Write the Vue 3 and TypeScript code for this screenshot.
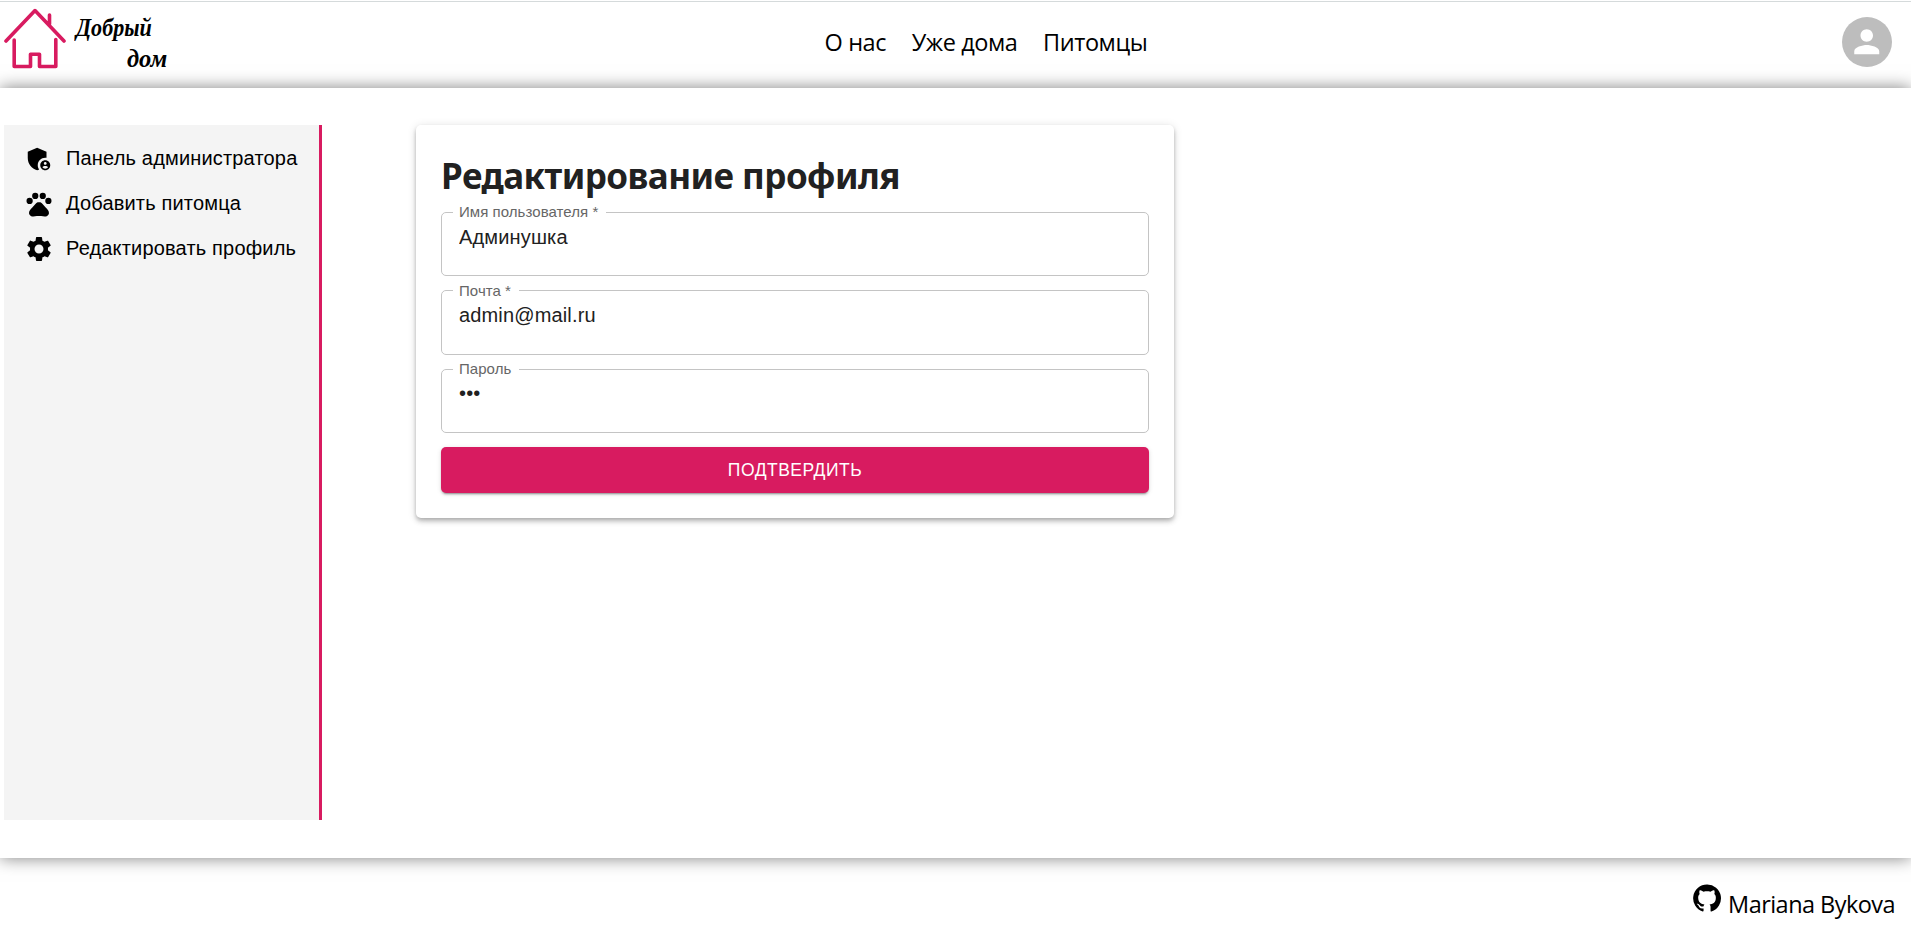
<script setup lang="ts">
import { ref } from 'vue'

interface Field {
  id: string
  label: string
  type: string
  value: string
}

const links = ['О нас', 'Уже дома', 'Питомцы']

const menu = [
  {
    text: 'Панель администратора',
    paths: [
      'M17 11c.34 0 .67.04 1 .09V6.27L10.5 3 3 6.27v4.91c0 4.54 3.2 8.79 7.5 9.82.55-.13 1.08-.32 1.6-.55-.69-.98-1.1-2.17-1.1-3.45 0-3.31 2.69-6 6-6z',
      'M17 13c-2.21 0-4 1.79-4 4s1.79 4 4 4 4-1.79 4-4-1.79-4-4-4zm0 1.38c.62 0 1.12.51 1.12 1.12s-.51 1.12-1.12 1.12-1.12-.51-1.12-1.12.5-1.12 1.12-1.12zm0 5.37c-.93 0-1.74-.46-2.24-1.17.05-.72 1.51-1.08 2.24-1.08s2.19.36 2.24 1.08c-.5.71-1.31 1.17-2.24 1.17z',
    ],
  },
  {
    text: 'Добавить питомца',
    paths: [
      'M2 9.5a2.5 2.5 0 1 0 5 0a2.5 2.5 0 1 0-5 0M6.5 5.5a2.5 2.5 0 1 0 5 0a2.5 2.5 0 1 0-5 0M12.5 5.5a2.5 2.5 0 1 0 5 0a2.5 2.5 0 1 0-5 0M17 9.5a2.5 2.5 0 1 0 5 0a2.5 2.5 0 1 0-5 0',
      'M17.34 14.86c-.87-1.02-1.6-1.89-2.48-2.91-.46-.54-1.05-1.08-1.75-1.32-.11-.04-.22-.07-.33-.09-.25-.04-.52-.04-.78-.04s-.53 0-.79.05c-.11.02-.22.05-.33.09-.7.24-1.28.78-1.75 1.32-.87 1.02-1.6 1.89-2.48 2.91-1.31 1.31-2.92 2.76-2.62 4.79.29 1.02 1.02 2.03 2.33 2.32.73.15 3.06-.44 5.54-.44h.18c2.48 0 4.81.58 5.54.44 1.31-.29 2.04-1.31 2.33-2.32.31-2.04-1.3-3.49-2.61-4.8z',
    ],
  },
  {
    text: 'Редактировать профиль',
    paths: [
      'M19.14 12.94c.04-.3.06-.61.06-.94 0-.32-.02-.64-.07-.94l2.03-1.58c.18-.14.23-.41.12-.61l-1.92-3.32c-.12-.22-.37-.29-.59-.22l-2.39.96c-.5-.38-1.03-.7-1.62-.94l-.36-2.54c-.04-.24-.24-.41-.48-.41h-3.84c-.24 0-.43.17-.47.41l-.36 2.54c-.59.24-1.13.57-1.62.94l-2.39-.96c-.22-.08-.47 0-.59.22L2.74 8.87c-.12.21-.08.47.12.61l2.03 1.58c-.05.3-.09.63-.09.94s.02.64.07.94l-2.03 1.58c-.18.14-.23.41-.12.61l1.92 3.32c.12.22.37.29.59.22l2.39-.96c.5.38 1.03.7 1.62.94l.36 2.54c.05.24.24.41.48.41h3.84c.24 0 .44-.17.47-.41l.36-2.54c.59-.24 1.13-.56 1.62-.94l2.39.96c.22.08.47 0 .59-.22l1.92-3.32c.12-.22.07-.47-.12-.61l-2.01-1.58zM12 15.6c-1.98 0-3.6-1.62-3.6-3.6s1.62-3.6 3.6-3.6 3.6 1.62 3.6 3.6-1.62 3.6-3.6 3.6z',
    ],
  },
]

const fields = ref<Field[]>([
  { id: 'name', label: 'Имя пользователя *', type: 'text', value: 'Админушка' },
  { id: 'mail', label: 'Почта *', type: 'text', value: 'admin@mail.ru' },
  { id: 'password', label: 'Пароль', type: 'password', value: '123' },
])
</script>

<template>
  <div class="page">
    <header class="header">
      <div class="brand">
        <svg class="house" viewBox="0 0 62 62" fill="none" stroke="#d81b60" stroke-width="3.6" stroke-linecap="round" stroke-linejoin="round">
          <path d="M2 33 31 2.600 60 33M45.500 16V7" />
          <path d="M10.200 32v26.500h16.300V46.200h9v12.300H51.800V31.500" />
        </svg>
        <div class="brand-name">
          <span class="word first">Добрый</span>
          <span class="word second">дом</span>
        </div>
      </div>
      <nav class="nav">
        <a v-for="link in links" :key="link">{{ link }}</a>
      </nav>
      <div class="avatar">
        <svg viewBox="0 0 24 24" fill="#fff">
          <path d="M12 12c2.210 0 4-1.790 4-4s-1.790-4-4-4-4 1.790-4 4 1.790 4 4 4zm0 2c-2.670 0-8 1.340-8 4v2h16v-2c0-2.660-5.330-4-8-4z" />
        </svg>
      </div>
    </header>

    <main class="main">
      <aside class="sidebar">
        <a v-for="item in menu" :key="item.text" class="menu-item">
          <svg viewBox="0 0 24 24"><path v-for="d in item.paths" :key="d" :d="d" /></svg>
          <span>{{ item.text }}</span>
        </a>
      </aside>
      <form class="card" @submit.prevent>
        <h1>Редактирование профиля</h1>
        <fieldset v-for="field in fields" :key="field.id" class="field">
          <legend><label :for="field.id">{{ field.label }}</label></legend>
          <input :id="field.id" v-model="field.value" :type="field.type" />
        </fieldset>
        <button type="submit">Подтвердить</button>
      </form>
    </main>

    <footer class="footer">
      <svg viewBox="0 0 24 24">
        <path d="M12 1.270a11 11 0 00-3.480 21.460c.55.09.73-.28.73-.55v-1.840c-3.030.64-3.670-1.460-3.670-1.460-.55-1.290-1.280-1.650-1.280-1.650-.92-.65.1-.65.1-.65 1.100 0 1.730 1.100 1.730 1.100.92 1.650 2.570 1.200 3.210.92a2 2 0 01.64-1.470c-2.470-.27-5.040-1.190-5.040-5.500 0-1.100.46-2.100 1.200-2.840a3.760 3.760 0 010-2.930s.91-.28 3.110 1.100c1.800-.49 3.700-.49 5.500 0 2.100-1.380 3.020-1.100 3.020-1.100a3.760 3.760 0 01.1 2.930c.83.74 1.200 1.740 1.200 2.940 0 4.210-2.570 5.130-5.040 5.400.45.37.82.92.82 2.020v3.030c0 .27.1.64.73.55A11 11 0 0012 1.270" />
      </svg>
      <a>Mariana Bykova</a>
    </footer>
  </div>
</template>

<style>
body {
  background: #fff;
  overflow: hidden;
}
</style>

<style scoped>
.page {
  height: 926px;
  box-sizing: border-box;
  display: flex;
  flex-direction: column;
  padding-top: 1px;
  overflow: hidden;
  color: #000;
  font-family: 'Open Sans', 'Noto Sans', sans-serif;
}

.header {
  height: 87px;
  flex: none;
  box-sizing: border-box;
  border-top: 1px solid #d5dadb;
  display: grid;
  grid-template-columns: 1fr auto 1fr;
  align-items: start;
}

.brand {
  display: flex;
  padding: 6px 0 0 4px;
}

.house {
  width: 62px;
  height: 62px;
}

.brand-name {
  display: flex;
  flex-direction: column;
  align-items: flex-start;
  width: 104px;
  padding: 4px 0 0 10px;
  font: italic bold 26px/31px 'Liberation Serif', serif;
}

.word {
  white-space: nowrap;
  transform-origin: left center;
}

.first {
  transform: scaleX(0.85);
}

.second {
  margin-left: 51px;
  transform: scaleX(0.94);
}

.nav {
  display: flex;
  gap: 25.5px;
  padding: 24px 0 0 61px;
  font-size: 23.5px;
  line-height: 33px;
  letter-spacing: -0.4px;
}

.avatar {
  justify-self: end;
  width: 50px;
  height: 50px;
  margin: 15px 19px 0 0;
  border-radius: 50%;
  background: #bdbdbd;
  display: flex;
  align-items: center;
  justify-content: center;
}

.avatar svg {
  width: 37.5px;
  height: 37.5px;
}

.main {
  height: 770px;
  flex: none;
  box-sizing: border-box;
  display: flex;
  align-items: flex-start;
  padding: 37px 0 38px 4px;
  box-shadow: 0 0 16px rgba(0, 0, 0, 0.5);
}

.sidebar {
  width: 318px;
  height: 695px;
  flex: none;
  box-sizing: border-box;
  padding: 11px 0 0 20px;
  border-right: 3px solid #d81b60;
  background: #f4f4f4;
  font: 20px/45px 'Liberation Sans', Arial, sans-serif;
  letter-spacing: 0.17px;
}

.menu-item {
  display: flex;
  align-items: center;
  gap: 12px;
  height: 45px;
  white-space: nowrap;
}

.menu-item svg {
  width: 30px;
  height: 30px;
}

.card {
  width: 758px;
  height: 393px;
  flex: none;
  box-sizing: border-box;
  margin-left: 94px;
  padding: 25px;
  border-radius: 5px;
  color: #212121;
  box-shadow: 0 2px 4px -1px rgba(0, 0, 0, 0.2), 0 4px 5px 0 rgba(0, 0, 0, 0.14), 0 1px 10px 0 rgba(0, 0, 0, 0.12);
}

h1 {
  height: 54px;
  margin: 0;
  font-family: 'Noto Sans', 'Open Sans', sans-serif;
  font-size: 35px;
  line-height: 51px;
  font-weight: 700;
  letter-spacing: -0.55px;
  white-space: nowrap;
}

.field {
  width: 708px;
  height: 72px;
  box-sizing: border-box;
  margin: 0 0 6.5px;
  padding: 0 17px;
  border: 1px solid #c4c4c4;
  border-radius: 5px;
  min-width: 0;
  font-family: 'Liberation Sans', Arial, sans-serif;
}

legend {
  height: 16px;
  margin-left: -6px;
  padding: 0 8px 0 6px;
  font-size: 15px;
  line-height: 16px;
  letter-spacing: 0.05px;
  color: #666;
}

.field input {
  display: block;
  width: 100%;
  height: 29px;
  margin-top: 3px;
  padding: 0;
  border: 0;
  outline: 0;
  background: none;
  color: #212121;
  font: 20px/29px 'Liberation Sans', Arial, sans-serif;
  letter-spacing: 0.15px;
}

.field + .field input {
  margin-top: 2px;
}

button {
  display: block;
  width: 708px;
  height: 46px;
  margin: 14px 0 0;
  padding: 0;
  border: 0;
  border-radius: 5px;
  background: #d81b60;
  color: #fff;
  font: 17.5px/46px 'Liberation Sans', Arial, sans-serif;
  letter-spacing: 0.5px;
  text-transform: uppercase;
  box-shadow: 0 3px 1px -2px rgba(0, 0, 0, 0.2), 0 2px 2px 0 rgba(0, 0, 0, 0.14), 0 1px 5px 0 rgba(0, 0, 0, 0.12);
}

.footer {
  flex: 1;
  display: flex;
  justify-content: flex-end;
  align-items: flex-start;
  gap: 6px;
  padding: 25px 16px 0 0;
  font-size: 23.5px;
  line-height: 42px;
  letter-spacing: -0.55px;
}

.footer svg {
  width: 30px;
  height: 30px;
}
</style>
